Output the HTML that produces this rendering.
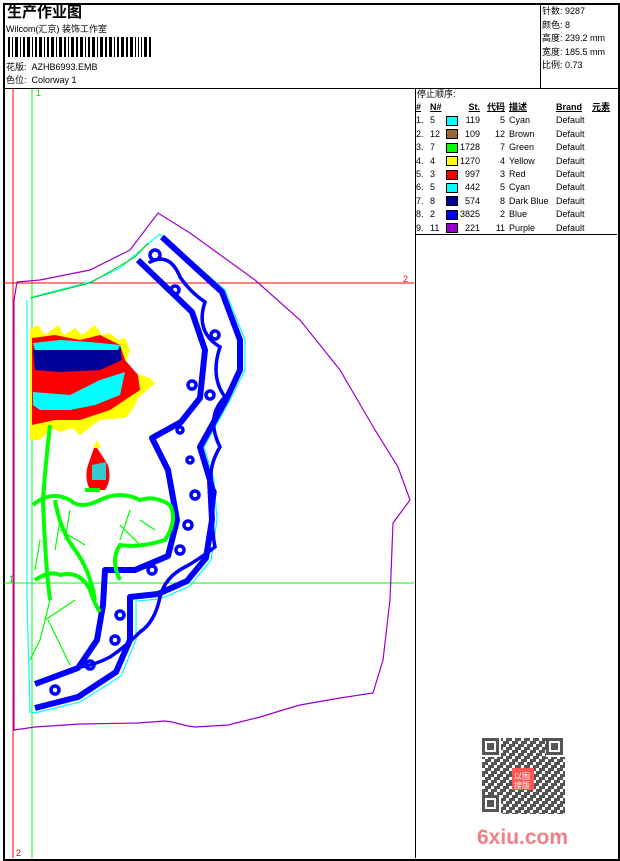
<!DOCTYPE html>
<html><head><meta charset="utf-8"><style>
*{margin:0;padding:0}
body{width:620px;height:860px;background:#fff;position:relative;overflow:hidden;font-family:"Liberation Sans","Noto Sans CJK SC",sans-serif;font-size:9px;color:#000}
.a{position:absolute;white-space:nowrap;line-height:11px}
.b{position:absolute;border:1px solid #000}
table{border-collapse:collapse}
td{padding:0;height:13.4px;line-height:13.4px;vertical-align:middle}
i{display:inline-block;width:10px;height:8px;border:1px solid #000;vertical-align:middle}
</style></head><body>
<div class="b" style="left:3px;top:3px;width:613px;height:854px;border-width:2px"></div>
<div class="b" style="left:3px;top:88px;width:615px;height:0;border-width:1px 0 0 0"></div>
<div class="b" style="left:540px;top:3px;width:0;height:85px;border-width:0 0 0 1px"></div>
<div class="b" style="left:415px;top:88px;width:0;height:770px;border-width:0 0 0 1px"></div>
<div class="b" style="left:415px;top:234px;width:202px;height:0;border-width:1px 0 0 0"></div>

<div class="a" style="left:7px;top:5px;font-size:15px;line-height:16px;font-weight:bold">生产作业图</div>
<div class="a" style="left:6px;top:24px">Wilcom(汇京) 装饰工作室</div>
<svg style="position:absolute;left:8px;top:37px" width="145" height="20">
<g fill="#000">
<rect x="0" width="2" height="20"/><rect x="4" width="1" height="20"/><rect x="7" width="3" height="20"/><rect x="12" width="1" height="20"/><rect x="15" width="2" height="20"/><rect x="19" width="3" height="20"/><rect x="24" width="1" height="20"/><rect x="27" width="2" height="20"/><rect x="31" width="3" height="20"/><rect x="36" width="1" height="20"/><rect x="39" width="2" height="20"/><rect x="43" width="3" height="20"/><rect x="48" width="1" height="20"/><rect x="51" width="3" height="20"/><rect x="56" width="2" height="20"/><rect x="60" width="1" height="20"/><rect x="63" width="3" height="20"/><rect x="68" width="2" height="20"/><rect x="72" width="3" height="20"/><rect x="77" width="1" height="20"/><rect x="80" width="2" height="20"/><rect x="84" width="3" height="20"/><rect x="89" width="1" height="20"/><rect x="92" width="3" height="20"/><rect x="97" width="2" height="20"/><rect x="101" width="3" height="20"/><rect x="106" width="1" height="20"/><rect x="109" width="2" height="20"/><rect x="113" width="3" height="20"/><rect x="118" width="2" height="20"/><rect x="122" width="3" height="20"/><rect x="127" width="1" height="20"/><rect x="130" width="1" height="20"/><rect x="133" width="1" height="20"/><rect x="136" width="3" height="20"/><rect x="141" width="2" height="20"/>
</g></svg>
<div class="a" style="left:6px;top:62px">花版:&nbsp; AZHB6993.EMB</div>
<div class="a" style="left:6px;top:75px">色位:&nbsp; Colorway 1</div>

<div class="a" style="left:542px;top:5px;line-height:13.5px">针数: 9287<br>颜色: 8<br>高度: 239.2 mm<br>宽度: 185.5 mm<br>比例: 0.73</div>

<div class="a" style="left:417px;top:89px">停止顺序:</div>
<table class="a" style="left:416px;top:101px">
<tr style="font-weight:bold;text-decoration:underline"><td style="width:14px">#</td><td style="width:16px">N#</td><td style="width:14px"></td><td style="width:20px;text-align:right">St.</td><td style="width:25px;text-align:right">代码</td><td style="width:47px;padding-left:4px">描述</td><td style="width:36px">Brand</td><td>元素</td></tr>
<tr><td>1.</td><td>5</td><td><i style="background:#0ff"></i></td><td align=right>119</td><td align=right>5</td><td style="padding-left:4px">Cyan</td><td>Default</td><td></td></tr>
<tr><td>2.</td><td>12</td><td><i style="background:#996633"></i></td><td align=right>109</td><td align=right>12</td><td style="padding-left:4px">Brown</td><td>Default</td><td></td></tr>
<tr><td>3.</td><td>7</td><td><i style="background:#0f0"></i></td><td align=right>1728</td><td align=right>7</td><td style="padding-left:4px">Green</td><td>Default</td><td></td></tr>
<tr><td>4.</td><td>4</td><td><i style="background:#ff0"></i></td><td align=right>1270</td><td align=right>4</td><td style="padding-left:4px">Yellow</td><td>Default</td><td></td></tr>
<tr><td>5.</td><td>3</td><td><i style="background:#f00"></i></td><td align=right>997</td><td align=right>3</td><td style="padding-left:4px">Red</td><td>Default</td><td></td></tr>
<tr><td>6.</td><td>5</td><td><i style="background:#0ff"></i></td><td align=right>442</td><td align=right>5</td><td style="padding-left:4px">Cyan</td><td>Default</td><td></td></tr>
<tr><td>7.</td><td>8</td><td><i style="background:#000099"></i></td><td align=right>574</td><td align=right>8</td><td style="padding-left:4px">Dark Blue</td><td>Default</td><td></td></tr>
<tr><td>8.</td><td>2</td><td><i style="background:#0000ff"></i></td><td align=right>3825</td><td align=right>2</td><td style="padding-left:4px">Blue</td><td>Default</td><td></td></tr>
<tr><td>9.</td><td>11</td><td><i style="background:#9900cc"></i></td><td align=right>221</td><td align=right>11</td><td style="padding-left:4px">Purple</td><td>Default</td><td></td></tr>
</table>

<svg style="position:absolute;left:0;top:0" width="415" height="858">
<line x1="13" y1="89" x2="13" y2="858" stroke="#f00"/>
<line x1="32" y1="89" x2="32" y2="858" stroke="#0f0"/>
<line x1="4" y1="283" x2="414" y2="283" stroke="#f00"/>
<line x1="4" y1="583" x2="414" y2="583" stroke="#0f0"/>
<text x="36" y="96" fill="#0c0" font-size="9" font-family="Liberation Sans">1</text>
<text x="403" y="282" fill="#f00" font-size="9" font-family="Liberation Sans">2</text>
<text x="9" y="582" fill="#0c0" font-size="9" font-family="Liberation Sans">1</text>
<text x="16" y="856" fill="#f00" font-size="9" font-family="Liberation Sans">2</text>
<polyline fill="none" stroke="#90c" stroke-width="1.2" points="17,282 40,280 90,270 130,250 158,213 190,233 255,280 300,320 340,370 375,430 398,467 410,500 393,523 390,600 383,660 373,693 340,698 300,705 283,710 260,717 228,725 195,727 188,726 172,722 165,721 138,723 80,724 35,727 14,730 14,300 17,282"/>
<polyline fill="none" stroke="#0ff" stroke-width="1.2" points="30,298 40,295 90,282 120,268 135,255 160,234 225,290 245,340 245,370 230,400 204,447 214,480 217,520 211,560 190,586 160,599 136,601 136,640 121,676 80,702 35,713 30,712 27,600 27,300"/>
<polyline fill="none" stroke="#0c0" stroke-width="1" points="31,298 90,283 135,257 148,243"/>
<g fill="none" stroke="#00f" stroke-width="6" stroke-linejoin="round">
<polyline points="162,237 222,292 240,340 240,370 226,400 200,447 210,480 212,520 206,558 187,581 158,594 130,597 130,640 116,672 78,697 35,708"/>
<polyline points="138,260 192,312 205,350 200,398 181,422 152,438 168,470 177,520 168,556 135,570 105,570 103,605 97,640 78,668 35,684"/>
</g>
<g fill="none" stroke="#00f" stroke-width="3.5" stroke-linecap="round">
<path d="M150,262 q20,-10 30,15 q10,15 25,25 q-10,30 15,45 q-10,30 5,50 q-20,20 -5,50 q-15,25 -5,45 q-5,30 0,55 q-20,15 -30,20 q-20,10 -25,30 q-5,25 -20,35 q-15,15 -30,25 q-15,8 -30,10"/>
<circle cx="155" cy="255" r="5"/><circle cx="175" cy="290" r="4"/><circle cx="215" cy="335" r="4"/><circle cx="192" cy="385" r="4"/><circle cx="210" cy="395" r="4"/><circle cx="180" cy="430" r="3"/><circle cx="190" cy="460" r="3"/><circle cx="195" cy="495" r="4"/><circle cx="188" cy="525" r="4"/><circle cx="180" cy="550" r="4"/><circle cx="152" cy="570" r="4"/><circle cx="120" cy="615" r="4"/><circle cx="115" cy="640" r="4"/><circle cx="90" cy="665" r="4"/><circle cx="55" cy="690" r="4"/>
</g>
<g>
<path d="M30,330 L38,325 45,335 58,325 64,335 75,328 82,335 95,325 102,335 110,333 118,340 125,338 130,350 125,365 140,375 150,378 155,383 145,392 138,398 135,405 128,415 125,418 100,420 80,435 72,428 60,432 52,428 40,440 30,440Z" fill="#ff0"/>
<path d="M32,338 L55,335 80,340 100,335 120,345 125,360 138,375 140,390 125,400 110,410 80,420 55,420 32,425Z" fill="#f00"/>
<path d="M33,350 L120,345 122,360 100,370 60,372 35,370Z" fill="#009"/>
<path d="M33,392 L70,395 100,380 125,372 120,395 95,405 70,410 40,410 33,405Z" fill="#0ff"/>
<path d="M33,343 L60,340 90,342 120,345 118,350 70,350 35,350Z" fill="#0ff"/>
<path d="M95,445 Q102,455 108,465 Q112,480 105,490 L90,490 Q84,478 88,465Z" fill="#f00"/>
<path d="M93,448 L97,440 101,448Z" fill="#ff0"/>
<path d="M92,465 L106,462 106,480 92,480Z" fill="#0ff" opacity="0.8"/>
</g>
<g fill="none" stroke="#0f0" stroke-width="4">
<path d="M50,425 Q45,470 43,500 Q45,560 50,600"/>
<path d="M33,505 Q50,490 70,500 Q80,510 100,500 Q120,490 140,500 Q155,495 170,505 Q178,520 165,540 Q140,548 120,545 Q110,560 120,580"/>
<path d="M55,500 Q60,530 75,550 Q90,570 95,600"/>
<path d="M35,580 Q50,570 60,575 Q80,570 90,590 Q95,605 100,612"/>
<path d="M85,490 L100,490"/>
</g>
<g fill="none" stroke="#0f0" stroke-width="1.2">
<path d="M60,520 L55,550 M60,530 L85,545 M70,510 L65,540 M130,510 L120,540 M140,520 L155,530 M120,525 L140,545 M40,540 L35,570 M50,600 L40,640 M45,620 L75,600 M48,620 L70,665 M40,640 L30,660"/>
</g>
</svg>

<svg style="position:absolute;left:482px;top:738px" width="83" height="76">
<defs><pattern id="q" width="9" height="9" patternUnits="userSpaceOnUse">
<rect width="9" height="9" fill="#fff"/><rect x="0" y="0" width="3" height="3" fill="#555"/><rect x="3" y="3" width="3" height="3" fill="#555"/><rect x="6" y="0" width="3" height="6" fill="#555"/><rect x="0" y="6" width="6" height="3" fill="#555"/></pattern></defs>
<rect width="83" height="76" fill="url(#q)"/>
<g fill="#fff"><rect width="19" height="19"/><rect x="64" width="19" height="19"/><rect y="57" width="19" height="19"/></g>
<g fill="none" stroke="#555" stroke-width="3"><rect x="1.5" y="1.5" width="14" height="14"/><rect x="65.5" y="1.5" width="14" height="14"/><rect x="1.5" y="58.5" width="14" height="14"/></g>
<g fill="#555"><rect x="5" y="5" width="7" height="7"/><rect x="69" y="5" width="7" height="7"/><rect x="5" y="62" width="7" height="7"/></g>
<rect x="30" y="30" width="22" height="22" fill="#f55"/>
<text x="32" y="41" font-size="8" fill="#fff" font-family="Noto Sans CJK SC,sans-serif">以图</text>
<text x="32" y="50" font-size="8" fill="#fff" font-family="Noto Sans CJK SC,sans-serif">搜版</text>
</svg>
<div class="a" style="left:477px;top:827px;font-size:21px;line-height:22px;font-weight:bold;color:#f08088">6xiu.com</div>
</body></html>
